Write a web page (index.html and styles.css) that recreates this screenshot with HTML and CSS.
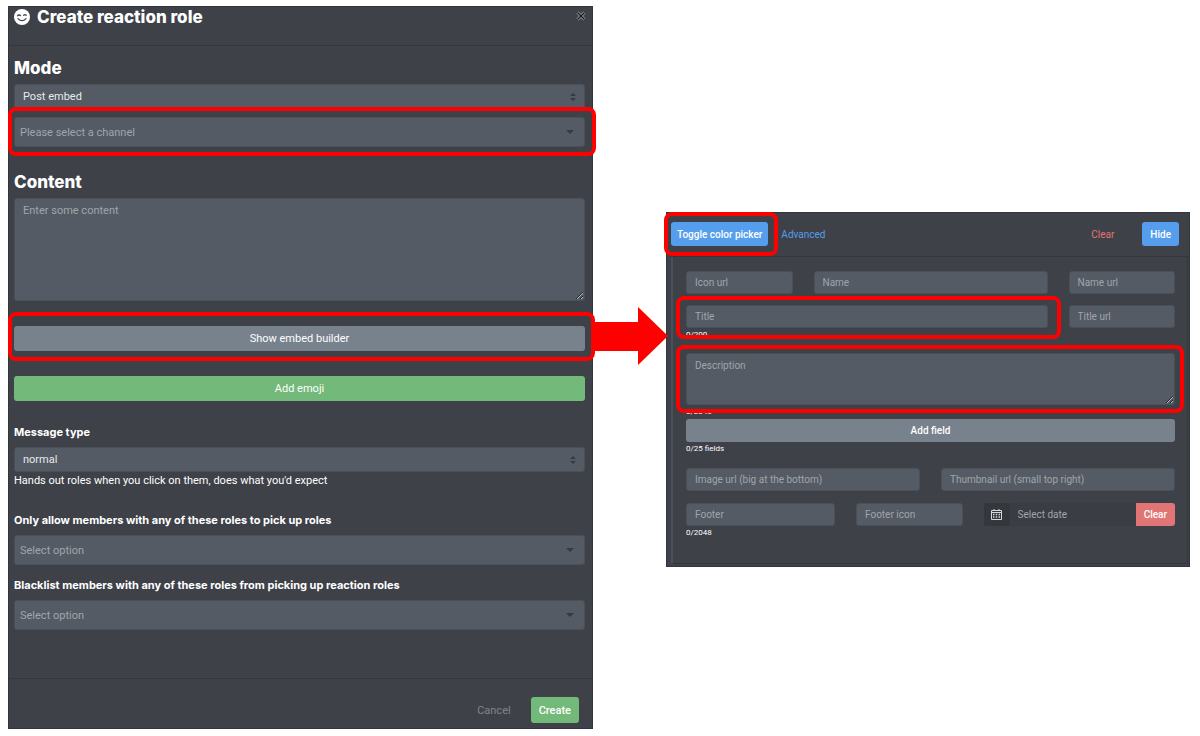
FILE: index.html
```
<!DOCTYPE html>
<html lang="en">
	<head>
		<meta charset="utf-8">
		<title>Create reaction role</title>
		<meta name="viewport" content="width=device-width, initial-scale=1">
		<link rel="stylesheet" href="styles.css">
	</head>
	<body>
		<main class="guide">
			<form class="panel modal">
				<header class="modal-header">
					<svg class="smile" viewBox="0 0 16 16" aria-hidden="true">
						<circle cx="8" cy="8" r="8" fill="#fff"/>
						<path d="M3.6 6.8q1.3-1.5 2.8-.2M9.6 6.2q1.4-1.2 2.6 0M4 9.6q4 4.2 8 0" fill="none" stroke="#3e4148" stroke-width="1.3" stroke-linecap="round"/>
					</svg>
					<h1>Create reaction role</h1>
					<button type="button" class="close" aria-label="Close">
						<svg viewBox="0 0 10 10"><path d="M1.5 1.5l7 7M8.5 1.5l-7 7" stroke="#a9acb1" stroke-width="2.8"/><path d="M1.5 1.5l7 7M8.5 1.5l-7 7" stroke="#15171a" stroke-width="1.4"/></svg>
					</button>
				</header>
				<div class="modal-body">
					<h2>Mode</h2>
					<div class="select">
						<select aria-label="Mode"><option>Post embed</option></select>
						<svg class="updown" viewBox="0 0 6 8"><path d="M0 3l3-3 3 3zM0 5l3 3 3-3z"/></svg>
					</div>
					<div class="select multi channel highlight">
						<select aria-label="Channel"><option>Please select a channel</option></select>
						<svg class="caret" viewBox="0 0 8 4"><path d="M0 0h8l-4 4z"/></svg>
					</div>

					<h2 class="content-title">Content</h2>
					<textarea class="content" aria-label="Content" placeholder="Enter some content"></textarea>
					<div class="show highlight">
						<button type="button" class="btn secondary block">Show embed builder</button>
					</div>
					<button type="button" class="btn success block">Add emoji</button>

					<label for="type" class="type-label">Message type</label>
					<div class="select">
						<select id="type"><option>normal</option></select>
						<svg class="updown" viewBox="0 0 6 8"><path d="M0 3l3-3 3 3zM0 5l3 3 3-3z"/></svg>
					</div>
					<p class="help">Hands out roles when you click on them, does what you'd expect</p>

					<label for="allow" class="allow-label">Only allow members with any of these roles to pick up roles</label>
					<div class="select multi">
						<select id="allow"><option>Select option</option></select>
						<svg class="caret" viewBox="0 0 8 4"><path d="M0 0h8l-4 4z"/></svg>
					</div>
					<label for="deny" class="deny-label">Blacklist members with any of these roles from picking up reaction roles</label>
					<div class="select multi">
						<select id="deny"><option>Select option</option></select>
						<svg class="caret" viewBox="0 0 8 4"><path d="M0 0h8l-4 4z"/></svg>
					</div>
				</div>
				<footer class="modal-footer">
					<button type="button" class="btn cancel">Cancel</button>
					<button type="button" class="btn success create">Create</button>
				</footer>
			</form>

			<svg class="arrow" viewBox="0 0 75 58" aria-hidden="true"><path d="M0 15h45V0l30 29-30 29V44H0z" fill="#f00"/></svg>

			<form class="panel embed">
				<header class="embed-header">
					<div class="toggle highlight">
						<button type="button" class="btn primary">Toggle color picker</button>
					</div>
					<a href="#" class="advanced">Advanced</a>
					<button type="button" class="btn clear">Clear</button>
					<button type="button" class="btn primary">Hide</button>
				</header>
				<div class="embed-body">
					<div class="row">
						<input class="w3" type="text" placeholder="Icon url" aria-label="Icon url">
						<input class="w6" type="text" placeholder="Name" aria-label="Name">
						<input class="w3" type="text" placeholder="Name url" aria-label="Name url">
					</div>
					<div class="row title-row">
						<div class="w9 title highlight">
							<input type="text" placeholder="Title" aria-label="Title">
							<small>0/200</small>
						</div>
						<input class="w3" type="text" placeholder="Title url" aria-label="Title url">
					</div>
					<div class="description highlight">
						<textarea placeholder="Description" aria-label="Description"></textarea>
						<small>0/2048</small>
					</div>
					<button type="button" class="btn secondary block">Add field</button>
					<small>0/25 fields</small>
					<div class="row image-row">
						<input class="w6" type="text" placeholder="Image url (big at the bottom)" aria-label="Image url">
						<input class="w6" type="text" placeholder="Thumbnail url (small top right)" aria-label="Thumbnail url">
					</div>
					<div class="row footer-row">
						<div class="w4">
							<input type="text" placeholder="Footer" aria-label="Footer">
							<small>0/2048</small>
						</div>
						<input class="w3" type="text" placeholder="Footer icon" aria-label="Footer icon">
						<div class="w5 date">
							<span class="calendar">
								<svg viewBox="0 0 11 11"><path d="M.5 1.5h10v9H.5zM.5 3.5h10M3 0v2M8 0v2" fill="none" stroke="#d5d7da"/><path d="M2 5.5h7M2 8h7" stroke="#d5d7da" stroke-width="1.4" stroke-dasharray="1.4"/></svg>
							</span>
							<input type="text" placeholder="Select date" aria-label="Select date">
							<button type="button" class="btn danger">Clear</button>
						</div>
					</div>
				</div>
			</form>
		</main>
	</body>
</html>
```
FILE: styles.css
```
* {
	box-sizing: border-box;
}
body {
	margin: 0;
	background: #fff;
	color: #fff;
	font-family: Roboto, sans-serif;
	font-size: 11px;
}
h1, h2, p {
	margin: 0;
}
h1, h2, label {
	font-family: Inter, sans-serif;
	font-weight: 700;
}
h1, h2 {
	font-size: 17px;
	font-weight: 800;
	line-height: 24px;
}
button, input, select, textarea {
	font: inherit;
	color: inherit;
}
small {
	display: block;
	font-size: 8px;
	line-height: 14px;
}

.guide {
	display: grid;
	grid-template-columns: 585fr 73px 524fr;
	align-items: start;
	padding: 6px 10px 7px 8px;
}
.panel {
	background: #3e4148;
	border: 1px solid #32363b;
	min-width: 0;
}

/* fields */
input, textarea, select {
	display: block;
	width: 100%;
	margin: 0;
	background: #545b64;
	border: 1px solid #4a5058;
	border-radius: 3px;
	outline: none;
}
input {
	height: 23px;
	padding: 0 8px;
}
textarea {
	padding: 5px 8px;
	line-height: 14px;
}
::placeholder {
	color: #a1a5ab;
	opacity: 1;
}
.select {
	position: relative;
}
.select select {
	appearance: none;
	height: 25px;
	padding: 0 8px;
	color: #e9eaec;
}
.select.multi select {
	height: 30px;
	padding: 0 5px;
	color: #a1a5ab;
}
.select svg {
	position: absolute;
	top: 50%;
	transform: translateY(-50%);
	fill: #343a40;
}
.updown {
	right: 9px;
	width: 6px;
	height: 8px;
}
.caret {
	right: 11px;
	width: 8px;
	height: 4px;
}

/* buttons */
.btn {
	height: 24px;
	padding: 0 8px;
	border: none;
	border-radius: 3px;
	background: none;
	white-space: nowrap;
	cursor: pointer;
}
.block {
	display: block;
	width: 100%;
	height: 25px;
}
.primary {
	background: #559eed;
}
.secondary {
	background: #78828d;
}
.success {
	background: #73b979;
}
.danger {
	background: #e17474;
}

/* red frames */
.highlight {
	position: relative;
}
.highlight::after {
	content: "";
	position: absolute;
	inset: -10px -11px -9px -6px;
	border: 4px solid #f00;
	border-radius: 8px;
	pointer-events: none;
	z-index: 1;
}

/* left modal */
.modal-header {
	display: flex;
	align-items: flex-start;
	height: 39px;
	padding: 0 6px 0 5px;
	border-bottom: 1px solid #34383d;
}
.modal-header h1 {
	flex: 1;
	margin-left: 7px;
	line-height: 20px;
}
.smile {
	width: 16px;
	height: 16px;
	margin-top: 2px;
}
.close {
	width: 10px;
	height: 10px;
	margin-top: 4px;
	padding: 0;
	border: none;
	background: none;
}
.close svg {
	display: block;
}
.modal-body {
	padding: 10px 7px 48px 5px;
}
h2 {
	margin-bottom: 4px;
}
.channel {
	margin-top: 8px;
}
.content-title {
	margin-top: 23px;
}
.content {
	height: 103px;
}
.show {
	margin: 25px 0;
}
.show::after {
	inset: -14px -10px -10px -6px;
}
label {
	display: block;
	margin-bottom: 5px;
	line-height: 20px;
}
.type-label {
	margin-top: 21px;
}
.help {
	line-height: 17px;
}
.allow-label {
	margin-top: 21px;
}
.deny-label {
	margin-top: 10px;
}
.modal-footer {
	display: flex;
	justify-content: flex-end;
	gap: 12px;
	padding: 18px 13px 5px;
	border-top: 1px solid #34383d;
}
.modal-footer .btn {
	height: 26px;
}
.cancel {
	color: #81858b;
}
.create {
	font-weight: 500;
}

.arrow {
	width: 75px;
	height: 58px;
	margin-top: 301px;
	z-index: 2;
}

/* embed builder */
.embed {
	margin-top: 206px;
	padding: 0 1px 2px 4px;
	font-size: 10px;
}
.embed-header {
	display: flex;
	align-items: center;
	height: 44px;
	padding: 0 9px 1px 0;
	border-bottom: 1px solid #34383d;
}
.embed-header .btn {
	font-weight: 500;
}
.toggle .btn {
	padding: 0 6px;
}
.toggle::after {
	inset: -10px -10px -10px -7px;
}
.advanced {
	margin: 0 auto 0 13px;
	color: #559eed;
	text-decoration: none;
}
.embed-header .clear {
	margin-right: 20px;
	color: #e17474;
	font-weight: 400;
}
.embed-body {
	padding: 14px 12px 23px 13px;
	border-left: 2px solid #4b4f57;
	border-right: 1px solid #34383d;
	border-bottom: 1px solid #34383d;
}
.row {
	display: grid;
	grid-template-columns: repeat(12, minmax(0, 1fr));
	column-gap: 21px;
}
.w3 {
	grid-column: span 3;
}
.w4 {
	grid-column: span 4;
}
.w5 {
	grid-column: span 5;
}
.w6 {
	grid-column: span 6;
}
.w9 {
	grid-column: span 9;
}
.title-row {
	margin: 11px 0;
}
.title::after {
	inset: -9px -13px 3px -10px;
}
.description::after {
	inset: -8px -9px 6px -10px;
}
.description textarea {
	height: 52px;
}
.embed .block {
	height: 23px;
	font-weight: 500;
}
.image-row {
	margin: 12px 0;
}
.date {
	display: flex;
	height: 23px;
	border-radius: 3px;
	background: #3a3d43;
}
.calendar {
	flex: none;
	display: grid;
	place-items: center;
	width: 26px;
	border-radius: 3px 0 0 3px;
	background: #34383d;
}
.calendar svg {
	width: 11px;
	height: 11px;
}
.date input {
	flex: 1;
	min-width: 0;
	background: none;
	border: none;
}
.date .btn {
	height: 23px;
	border-radius: 0 3px 3px 0;
	font-weight: 500;
}
```
